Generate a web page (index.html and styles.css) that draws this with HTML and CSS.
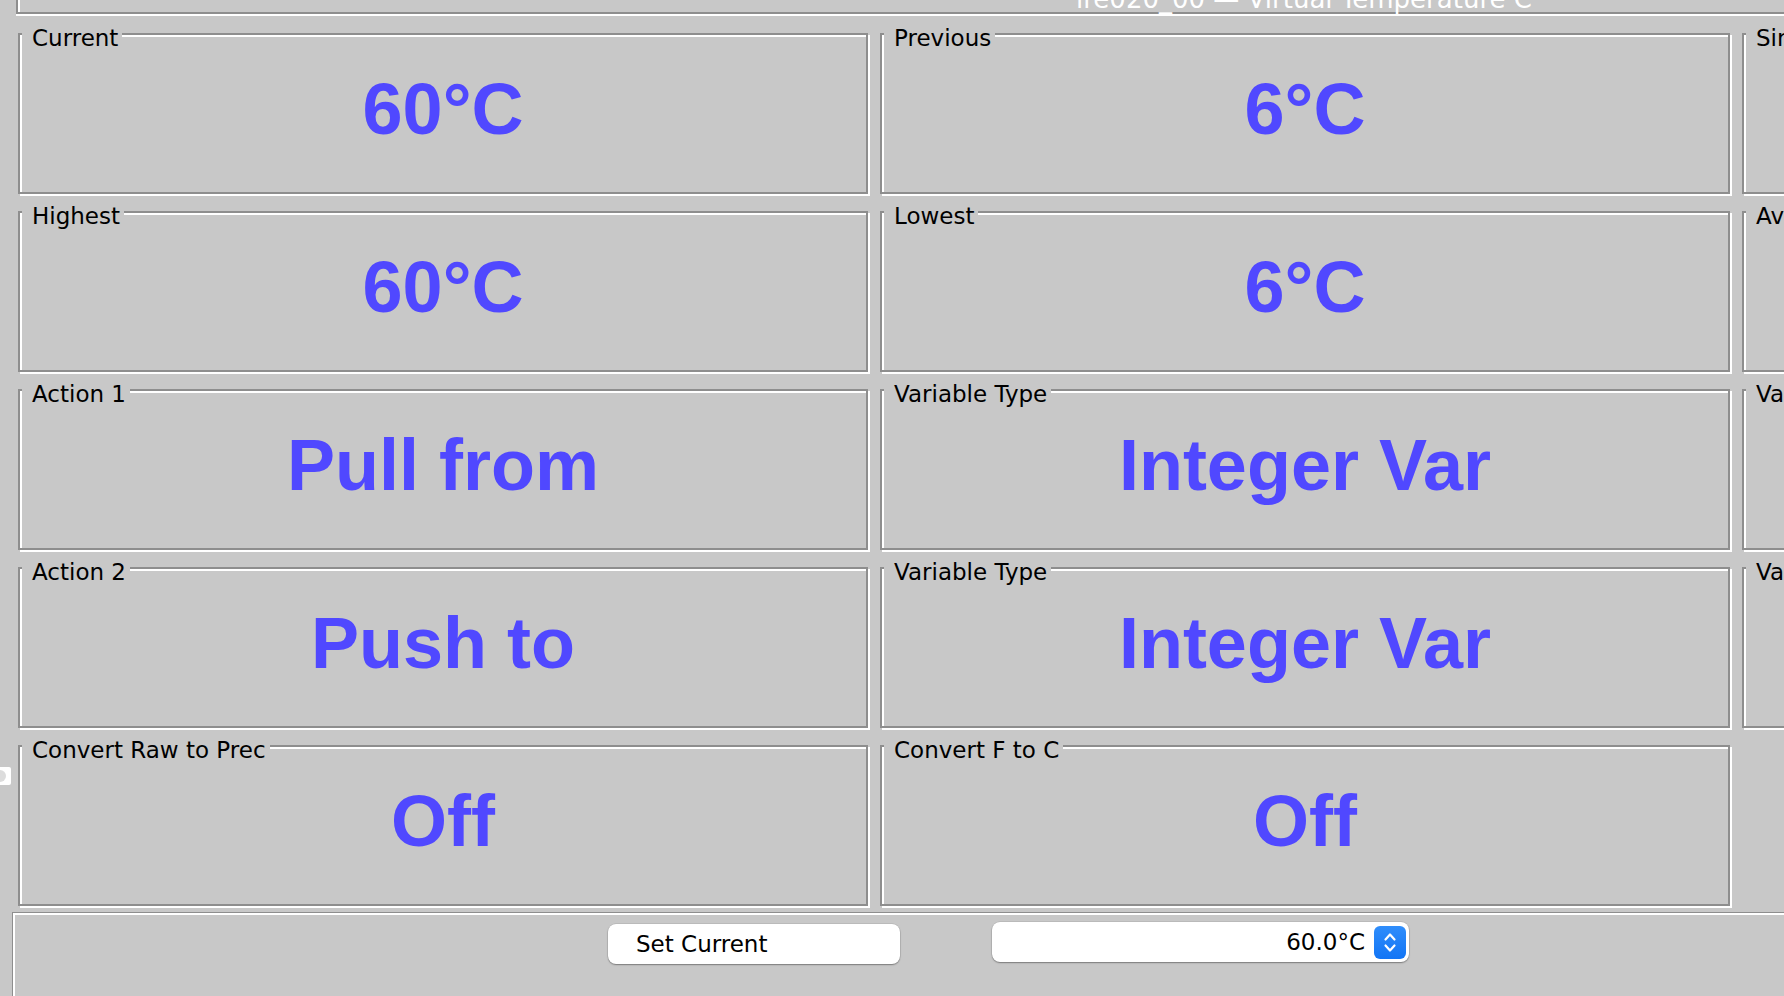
FILE: index.html
```html
<!DOCTYPE html>
<html>
<head>
<meta charset="utf-8">
<link rel="stylesheet" href="styles.css">
</head>
<body>
<div class="topbar"><div class="title">ire020_00 — Virtual Temperature C</div></div>
<div class="grid">
  <fieldset class="box"><legend>Current</legend><div class="value">60°C</div></fieldset>
  <fieldset class="box"><legend>Previous</legend><div class="value">6°C</div></fieldset>
  <fieldset class="box"><legend>Since Reset</legend><div class="value">12</div></fieldset>
  <fieldset class="box"><legend>Highest</legend><div class="value">60°C</div></fieldset>
  <fieldset class="box"><legend>Lowest</legend><div class="value">6°C</div></fieldset>
  <fieldset class="box"><legend>Average</legend><div class="value">33°C</div></fieldset>
  <fieldset class="box"><legend>Action 1</legend><div class="value">Pull from</div></fieldset>
  <fieldset class="box"><legend>Variable Type</legend><div class="value">Integer Var</div></fieldset>
  <fieldset class="box"><legend>Variable</legend><div class="value">iv01</div></fieldset>
  <fieldset class="box"><legend>Action 2</legend><div class="value">Push to</div></fieldset>
  <fieldset class="box"><legend>Variable Type</legend><div class="value">Integer Var</div></fieldset>
  <fieldset class="box"><legend>Variable</legend><div class="value">iv02</div></fieldset>
  <fieldset class="box"><legend>Convert Raw to Prec</legend><div class="value">Off</div></fieldset>
  <fieldset class="box"><legend>Convert F to C</legend><div class="value">Off</div></fieldset>
</div>
<div class="bottombar">
  <button class="btn">Set Current</button>
  <div class="spinner">
    <span class="spin-value">60.0°C</span>
    <span class="stepper">
      <svg width="32" height="33" viewBox="0 0 32 33">
        <polyline points="11.5,13.5 16,8.5 20.5,13.5" fill="none" stroke="#fff" stroke-width="2.2" stroke-linecap="round" stroke-linejoin="round"/>
        <polyline points="11.5,19.5 16,24.5 20.5,19.5" fill="none" stroke="#fff" stroke-width="2.2" stroke-linecap="round" stroke-linejoin="round"/>
      </svg>
    </span>
  </div>
</div>
<div class="knob"><span class="knob-dot"></span></div>
</body>
</html>
```
FILE: styles.css
```css
html, body {
  margin: 0;
  padding: 0;
  width: 1784px;
  height: 996px;
  overflow: hidden;
  background: #c8c8c8;
}
body {
  position: relative;
  font-family: "DejaVu Sans", "Liberation Sans", sans-serif;
  font-size: 23px;
  color: #000;
}

.topbar {
  margin-left: 16px;
  width: 2574px;
  height: 14px;
  box-sizing: border-box;
  border-left: 2px solid #8e8e8e;
  border-bottom: 2px solid #8e8e8e;
  box-shadow: inset 2px 0 0 #fff, 0 2px 0 #fff;
  display: flex;
  align-items: flex-end;
  justify-content: center;
}
.title {
  color: #fff;
  font-size: 26px;
  line-height: 26px;
  white-space: nowrap;
}

.grid {
  display: grid;
  grid-template-columns: repeat(3, 850px);
  column-gap: 12px;
  grid-auto-rows: 178px;
  margin: 6px 0 0 18px;
}

.box {
  margin: 0;
  padding: 0;
  min-width: 0;
  border: 2px solid #8e8e8e;
  box-shadow: inset 2px 2px 0 #fff, 2px 2px 0 #fff;
  align-self: start;
}
.box legend {
  margin-left: 2px;
  padding: 8px 4px 0 10px;
  height: 28px;
  box-sizing: border-box;
  line-height: 20px;
  background: #c8c8c8;
  white-space: nowrap;
}
.value {
  height: 144px;
  padding-bottom: 22px;
  box-sizing: border-box;
  display: flex;
  align-items: center;
  justify-content: center;
  font-family: "Liberation Sans", Arial, sans-serif;
  font-weight: bold;
  font-size: 72px;
  color: #5048ff;
  white-space: nowrap;
}

.bottombar {
  margin: 2px 0 0 12px;
  width: 2600px;
  height: 100px;
  box-sizing: border-box;
  border-top: 1px solid #8e8e8e;
  border-left: 1px solid #8e8e8e;
  box-shadow: inset 2px 2px 0 #fff;
  display: flex;
  align-items: flex-start;
  padding-left: 595px;
}
.btn {
  margin-top: 11px;
  width: 292px;
  height: 40px;
  border: none;
  border-radius: 8px;
  background: #fff;
  box-shadow: 0 1px 1.5px rgba(0,0,0,0.35), 0 0 0 0.5px rgba(0,0,0,0.12);
  font-family: "DejaVu Sans", sans-serif;
  font-size: 23px;
  color: #000;
  text-align: left;
  padding: 0 0 0 28px;
}
.spinner {
  margin: 9px 0 0 92px;
  width: 417px;
  height: 40px;
  box-sizing: border-box;
  border-radius: 8px;
  background: #fff;
  box-shadow: 0 1px 1.5px rgba(0,0,0,0.35), 0 0 0 0.5px rgba(0,0,0,0.12);
  display: flex;
  align-items: center;
  justify-content: flex-end;
  padding-right: 3px;
}
.spin-value {
  margin-right: 9px;
  line-height: 40px;
}
.stepper {
  width: 32px;
  height: 33px;
  border-radius: 6px;
  background: linear-gradient(#2f8dfb, #1275f5);
  display: block;
}
.stepper svg { display: block; }

.knob {
  position: absolute;
  left: 0;
  top: 767px;
  width: 11px;
  height: 18px;
  background: #fff;
  border-radius: 0 2px 2px 0;
  overflow: hidden;
}
.knob-dot {
  display: block;
  margin: 3px 0 0 -6px;
  width: 12px;
  height: 12px;
  border-radius: 50%;
  background: #dcdcdc;
}
```
